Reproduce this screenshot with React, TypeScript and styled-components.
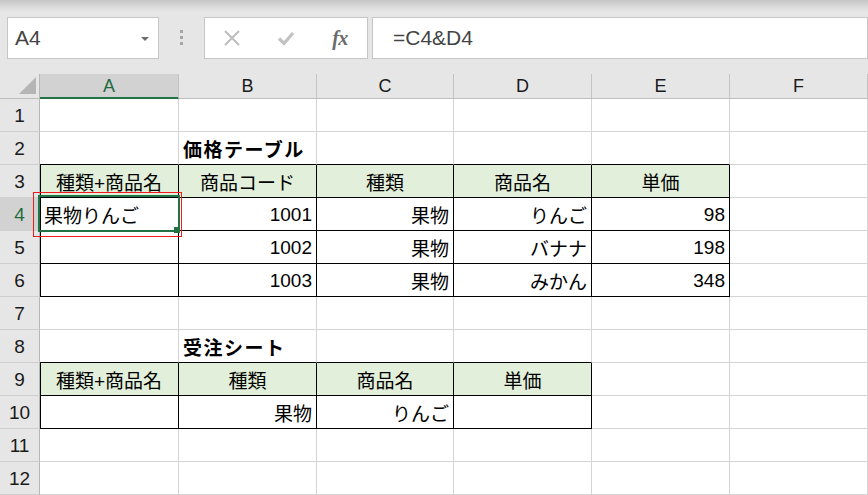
import React from 'react';
import styled, { createGlobalStyle } from 'styled-components';

const GlobalStyle = createGlobalStyle`
  html, body {
    margin: 0;
    padding: 0;
    background: #ffffff;
  }
  body {
    font-family: "Liberation Sans", "Noto Sans CJK JP", sans-serif;
  }
`;

const Window = styled.div`
  width: 868px;
  height: 495px;
  overflow: hidden;
  background: #e6e6e6;
`;

/* ---- formula bar ---- */

const FormulaBar = styled.div`
  display: flex;
  align-items: flex-start;
  height: 74px;
  box-sizing: border-box;
  padding-top: 17px;
  background: linear-gradient(#c6c6c6 0, #dedede 8px, #e6e6e6 12px);
`;

const NameBox = styled.div`
  position: relative;
  display: flex;
  align-items: center;
  box-sizing: border-box;
  margin-left: 7px;
  width: 152px;
  height: 42px;
  padding-left: 7px;
  background: #fff;
  border: 1px solid #c6c6c6;
  font-size: 21px;
  color: #444;
`;

const DropArrow = styled.span`
  position: absolute;
  right: 9px;
  top: 19px;
  width: 0;
  height: 0;
  border-left: 4px solid transparent;
  border-right: 4px solid transparent;
  border-top: 4px solid #6d6d6d;
`;

const Grip = styled.div`
  display: flex;
  flex-direction: column;
  align-items: center;
  gap: 3px;
  width: 45px;
  padding-top: 13px;
`;

const GripDot = styled.span`
  width: 3px;
  height: 3px;
  background: #a6a6a6;
`;

const FxBox = styled.div`
  display: flex;
  align-items: center;
  box-sizing: border-box;
  width: 164px;
  height: 42px;
  background: #fff;
  border: 1px solid #c6c6c6;
`;

const IconSlot = styled.div`
  display: flex;
  align-items: center;
  justify-content: center;
  width: 54px;
  height: 100%;
`;

const FxLabel = styled.span`
  font-family: "Liberation Serif", serif;
  font-style: italic;
  font-weight: 700;
  font-size: 20px;
  color: #6a6a6a;
  letter-spacing: -0.5px;
`;

const FormulaInput = styled.div`
  flex: 1;
  display: flex;
  align-items: center;
  box-sizing: border-box;
  margin-left: 4px;
  height: 42px;
  padding-left: 20px;
  background: #fff;
  border: 1px solid #c6c6c6;
  font-size: 21px;
  color: #444;
`;

/* ---- sheet ---- */

const Sheet = styled.div`
  display: grid;
  grid-template-columns: 40px 139px 138px 137px 138px 138px 138px;
  grid-template-rows: 25px repeat(12, 33px);
  background: #fff;
`;

const Corner = styled.div`
  display: flex;
  align-items: flex-end;
  justify-content: flex-end;
  box-sizing: border-box;
  padding: 0 3px 4px 0;
  background: #e6e6e6;
  border-right: 1px solid #b7b7b7;
  border-bottom: 1px solid #bdbdbd;
`;

const CornerMark = styled.span`
  width: 0;
  height: 0;
  border-left: 17px solid transparent;
  border-bottom: 17px solid #b5b5b5;
`;

const ColHead = styled.div<{ $active?: boolean }>`
  display: flex;
  align-items: center;
  justify-content: center;
  box-sizing: border-box;
  padding-top: 1px;
  background: ${(p) => (p.$active ? '#d2d2d2' : '#e6e6e6')};
  border-right: 1px solid #c3c3c3;
  border-bottom: 1px solid ${(p) => (p.$active ? '#217346' : '#bdbdbd')};
  box-shadow: ${(p) => (p.$active ? 'inset 0 -1px 0 #217346' : 'none')};
  color: ${(p) => (p.$active ? '#1e6b40' : '#1a1a1a')};
  font-size: 18px;
`;

const RowHead = styled.div<{ $active?: boolean }>`
  display: flex;
  align-items: center;
  justify-content: center;
  box-sizing: border-box;
  padding-top: 1px;
  background: ${(p) => (p.$active ? '#d2d2d2' : '#e6e6e6')};
  border-right: 1px solid ${(p) => (p.$active ? '#217346' : '#b7b7b7')};
  border-bottom: 1px solid #cfcfcf;
  box-shadow: ${(p) => (p.$active ? 'inset -1px 0 0 #217346' : 'none')};
  color: ${(p) => (p.$active ? '#1e6b40' : '#1a1a1a')};
  font-size: 19px;
`;

type Align = 'left' | 'right' | 'center';

const Cell = styled.div<{
  $align: Align;
  $fill?: boolean;
  $bold?: boolean;
  $right: string;
  $bottom: string;
  $edge?: boolean;
}>`
  position: relative;
  display: flex;
  align-items: center;
  justify-content: ${(p) =>
    p.$align === 'left' ? 'flex-start' : p.$align === 'right' ? 'flex-end' : 'center'};
  box-sizing: border-box;
  padding: 1px 4px 0 4px;
  background: ${(p) => (p.$fill ? '#e2efda' : '#fff')};
  border-right: 1px solid ${(p) => p.$right};
  border-bottom: 1px solid ${(p) => p.$bottom};
  box-shadow: ${(p) => (p.$edge ? 'inset 1px 0 0 #000' : 'none')};
  font-size: 19px;
  font-weight: ${(p) => (p.$bold ? 700 : 400)};
  letter-spacing: ${(p) => (p.$bold ? '1.5px' : '0')};
  color: #000;
  white-space: nowrap;
`;

const SelectionFrame = styled.div`
  position: absolute;
  left: -2px;
  top: -3px;
  right: -2px;
  bottom: -2px;
  border: 2px solid #217346;
  z-index: 2;
  pointer-events: none;
`;

const FillHandle = styled.div`
  position: absolute;
  right: -2px;
  bottom: -3px;
  width: 6px;
  height: 6px;
  background: #217346;
  z-index: 3;
`;

const RedMark = styled.div`
  position: absolute;
  left: -7px;
  top: -6px;
  right: -4px;
  bottom: -7px;
  border: 1px solid #f01c1c;
  z-index: 4;
  pointer-events: none;
`;

interface CellData {
  text?: string;
  align?: Align;
  fill?: boolean;
  bold?: boolean;
}

const columns = ['A', 'B', 'C', 'D', 'E', 'F'];

const head = (text: string): CellData => ({ text, align: 'center', fill: true });
const num = (text: string): CellData => ({ text, align: 'right' });

const rows: CellData[][] = [
  [],
  [{}, { text: '価格テーブル', bold: true }],
  [head('種類+商品名'), head('商品コード'), head('種類'), head('商品名'), head('単価')],
  [{ text: '果物りんご' }, num('1001'), num('果物'), num('りんご'), num('98')],
  [{}, num('1002'), num('果物'), num('バナナ'), num('198')],
  [{}, num('1003'), num('果物'), num('みかん'), num('348')],
  [],
  [{}, { text: '受注シート', bold: true }],
  [head('種類+商品名'), head('種類'), head('商品名'), head('単価')],
  [{}, num('果物'), num('りんご'), {}],
  [],
  [],
];

// bordered ranges: A3:E6 and A9:D10 (0-based row index)
const inTable = (r: number, c: number) =>
  (r >= 2 && r <= 5 && c >= 0 && c <= 4) || (r >= 8 && r <= 9 && c >= 0 && c <= 3);

const GRID = '#d4d4d4';
const activeRow = 3;
const activeCol = 0;

const XIcon = () => (
  <svg width="18" height="18" viewBox="0 0 18 18">
    <path d="M2 2 L16 16 M16 2 L2 16" stroke="#bdbdbd" strokeWidth="2" fill="none" />
  </svg>
);

const CheckIcon = () => (
  <svg width="18" height="18" viewBox="0 0 18 18">
    <path d="M2 9.5 L7 14.5 L16 4" stroke="#c2c2c2" strokeWidth="3.2" fill="none" />
  </svg>
);

const App: React.FC = () => {
  return (
    <Window>
      <GlobalStyle />
      <FormulaBar>
        <NameBox>
          A4
          <DropArrow />
        </NameBox>
        <Grip>
          <GripDot />
          <GripDot />
          <GripDot />
        </Grip>
        <FxBox>
          <IconSlot>
            <XIcon />
          </IconSlot>
          <IconSlot>
            <CheckIcon />
          </IconSlot>
          <IconSlot>
            <FxLabel>fx</FxLabel>
          </IconSlot>
        </FxBox>
        <FormulaInput>=C4&amp;D4</FormulaInput>
      </FormulaBar>

      <Sheet>
        <Corner>
          <CornerMark />
        </Corner>
        {columns.map((col, c) => (
          <ColHead key={col} $active={c === activeCol}>
            {col}
          </ColHead>
        ))}
        {rows.map((row, r) => (
          <React.Fragment key={r}>
            <RowHead $active={r === activeRow}>{r + 1}</RowHead>
            {columns.map((col, c) => {
              const cell = row[c] || {};
              const right = inTable(r, c) || inTable(r, c + 1) ? '#000' : GRID;
              const bottom = inTable(r, c) || inTable(r + 1, c) ? '#000' : GRID;
              const selected = r === activeRow && c === activeCol;
              return (
                <Cell
                  key={col}
                  $align={cell.align || 'left'}
                  $fill={cell.fill}
                  $bold={cell.bold}
                  $right={right}
                  $bottom={bottom}
                  $edge={c === 0 && inTable(r, c)}
                >
                  {cell.text}
                  {selected && (
                    <>
                      <SelectionFrame />
                      <FillHandle />
                      <RedMark />
                    </>
                  )}
                </Cell>
              );
            })}
          </React.Fragment>
        ))}
      </Sheet>
    </Window>
  );
};

export default App;
